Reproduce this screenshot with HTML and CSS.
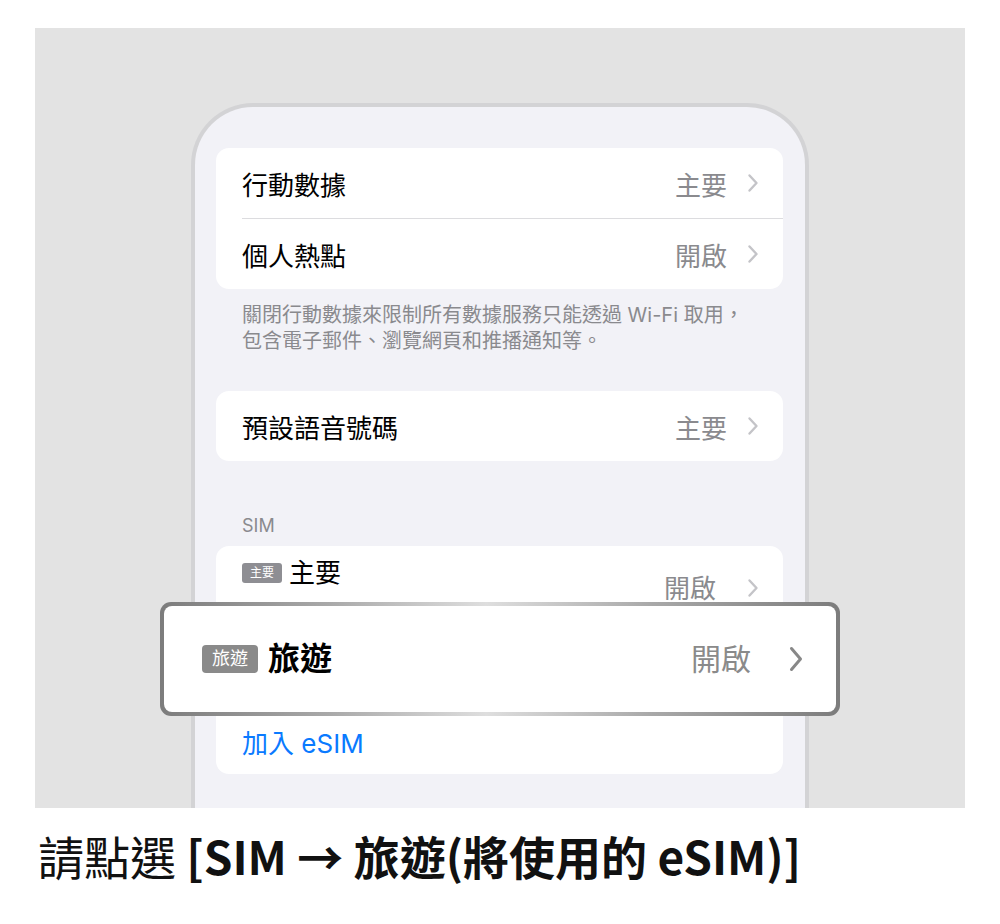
FILE: index.html
```html
<!DOCTYPE html>
<html lang="zh-Hant">

<head>
  <meta charset="UTF-8" />
  <meta name="viewport" content="width=device-width, initial-scale=1.0" />
  <title>選擇 eSIM</title>
  <link rel="stylesheet" href="styles.css">
</head>

<body>
  <div class="stage">
    <div class="phone">
      <div class="card">
        <div class="row">
          <span class="label">行動數據</span>
          <span class="value">主要</span>
          <svg class="chev" width="12" height="20" viewBox="0 0 12 20"><path d="M2.5 2.5 L9.5 10 L2.5 17.5" /></svg>
        </div>
        <div class="sep"></div>
        <div class="row">
          <span class="label">個人熱點</span>
          <span class="value">開啟</span>
          <svg class="chev" width="12" height="20" viewBox="0 0 12 20"><path d="M2.5 2.5 L9.5 10 L2.5 17.5" /></svg>
        </div>
      </div>

      <div class="footnote">關閉行動數據來限制所有數據服務只能透過 Wi-Fi 取用，<br>包含電子郵件、瀏覽網頁和推播通知等。</div>

      <div class="card card-voice">
        <div class="row">
          <span class="label">預設語音號碼</span>
          <span class="value">主要</span>
          <svg class="chev" width="12" height="20" viewBox="0 0 12 20"><path d="M2.5 2.5 L9.5 10 L2.5 17.5" /></svg>
        </div>
      </div>

      <div class="section-title">SIM</div>

      <div class="card">
        <div class="row row-sim">
          <span class="label"><span class="tag">主要</span>主要</span>
          <span class="value">開啟</span>
          <svg class="chev" width="12" height="20" viewBox="0 0 12 20"><path d="M2.5 2.5 L9.5 10 L2.5 17.5" /></svg>
        </div>
        <!-- second line sits under the callout -->
        <div class="row row-sim row-covered"></div>
        <div class="row row-add">
          <span class="link">加入 eSIM</span>
        </div>
      </div>
    </div>

    <!-- enlarged callout of the travel line -->
    <div class="callout">
      <div class="callout-inner">
        <span class="tag tag-big">旅遊</span>
        <span class="callout-label">旅遊</span>
        <span class="callout-value">開啟</span>
        <svg class="chev chev-big" width="14" height="26" viewBox="0 0 14 26"><path d="M2.5 2.5 L11.5 13 L2.5 23.5" /></svg>
      </div>
    </div>
  </div>

  <div class="caption">請點選 <b>[SIM → 旅遊(將使用的 eSIM)]</b></div>
</body>

</html>
```

FILE: styles.css
```css
body {
  margin: 0;
  padding: 0;
  background-color: #fff;
  font-family: Inter, 'Noto Sans CJK TC', sans-serif;
}

.stage {
  position: relative;
  width: 930px;
  height: 780px;
  margin: 28px 0 0 35px;
  padding-top: 75px;
  box-sizing: border-box;
  background-color: #e3e3e3;
  overflow: hidden;
}

.phone {
  width: 618px;
  height: 705px;
  margin-left: 156px;
  padding: 41px 22px 0 21px;
  box-sizing: border-box;
  background-color: #f2f2f7;
  border: 4px solid #d3d3d5;
  border-bottom: none;
  border-radius: 62px 62px 0 0;
}

.card {
  background-color: #fff;
  border-radius: 13px;
  overflow: hidden;
}

.row {
  display: flex;
  align-items: center;
  height: 70px;
  padding: 0 24px 0 26px;
  font-size: 26px;
  color: #000;
}

.label {
  flex: 1;
  display: flex;
  align-items: center;
}

.value {
  color: #8a8a8e;
  margin-right: 20px;
}

.chev {
  display: block;
  fill: none;
  stroke: #c4c4c8;
  stroke-width: 2.4;
  stroke-linecap: round;
  stroke-linejoin: round;
}

.sep {
  height: 1px;
  margin-left: 26px;
  background-color: #dcdcdf;
}

.footnote {
  padding: 13px 26px 0;
  font-size: 20px;
  line-height: 26px;
  color: #8a8a8e;
  white-space: nowrap;
}

.card-voice {
  margin-top: 37px;
}

.section-title {
  margin: 53px 0 8px;
  padding-left: 26px;
  font-size: 18px;
  line-height: 24px;
  color: #8a8a8e;
}

.row-sim {
  height: 82px;
  align-items: flex-start;
  line-height: 26px;
}

.row-sim .label {
  margin-top: 14px;
}

.row-sim .value {
  margin-top: 30px;
  margin-right: 31px;
}

.row-sim .chev {
  margin-top: 32px;
}

.row-covered {
  height: 81px;
}

.row-add {
  height: 65px;
}

.link {
  color: #0a7aff;
}

.tag {
  display: inline-block;
  width: 40px;
  height: 20px;
  margin-right: 7px;
  border-radius: 3px;
  background-color: #8e8e93;
  color: #fff;
  font-size: 12px;
  line-height: 20px;
  text-align: center;
}

/* callout floating over the SIM list */
.callout {
  position: absolute;
  left: 125px;
  top: 574px;
  width: 680px;
  height: 114px;
  padding: 4px;
  box-sizing: border-box;
  border-radius: 11px;
  background: linear-gradient(to right, #7c7c7c 0%, #a9a9a9 25%, #dedede 48%, #a9a9a9 72%, #7c7c7c 100%);
}

.callout-inner {
  display: flex;
  align-items: center;
  height: 100%;
  padding: 0 33px 0 38px;
  border-radius: 8px;
  background-color: #fff;
}

.tag-big {
  width: 56px;
  height: 28px;
  margin-right: 10px;
  border-radius: 4px;
  background-color: #8a8a8a;
  font-size: 18px;
  line-height: 28px;
}

.callout-label {
  flex: 1;
  font-size: 32px;
  line-height: 36px;
  font-weight: 700;
  color: #000;
}

.callout-value {
  margin-right: 38px;
  font-size: 30px;
  line-height: 36px;
  color: #8a8a8a;
}

.chev-big {
  stroke: #888;
  stroke-width: 3;
}

.caption {
  margin: 17px 0 0 38px;
  font-family: 'Noto Sans CJK TC', sans-serif;
  font-size: 46px;
  line-height: 60px;
  color: #111;
}

.caption b {
  font-weight: 700;
}
```
